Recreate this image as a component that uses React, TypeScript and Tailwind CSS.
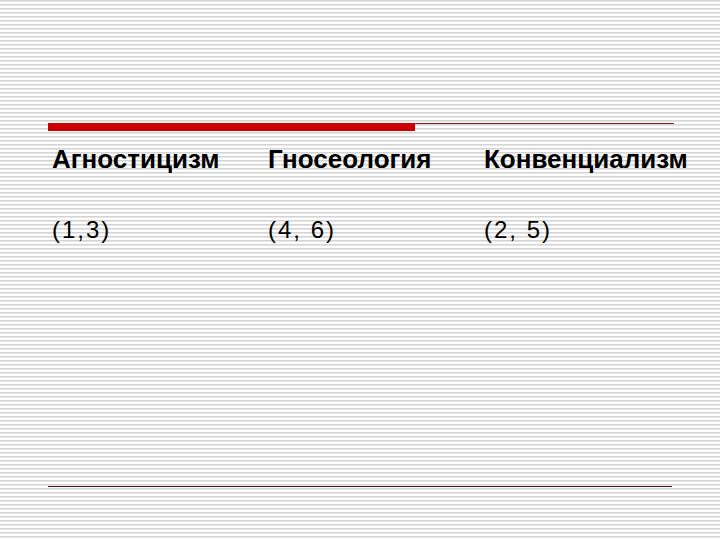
export default function App() {
  return (
    <div className="w-[720px] h-[540px] overflow-hidden bg-white bg-[repeating-linear-gradient(to_bottom,#d4d4d4_0px,#d4d4d4_1px,#e6e6e6_1px,#e6e6e6_2px,#ffffff_2px,#ffffff_4px)] pt-[123px] pl-[48px]" style={{ fontFamily: '"Liberation Sans", Arial, sans-serif' }}>
      <div className="w-[626px] flex items-start">
        <div className="w-[367px] h-[8px] bg-[#cc0000]" />
        <div className="flex-1 h-px bg-[#8b1a1a]" />
      </div>
      <div className="grid grid-cols-[216px_216px_216px] pl-[4px] mt-[13px] text-black">
        <div className="text-[26px] font-bold leading-[30px]">Агностицизм</div>
        <div className="text-[26px] font-bold leading-[30px]">Гносеология</div>
        <div className="text-[26px] font-bold leading-[30px]">Конвенциализм</div>
        <div className="text-[24px] tracking-[2px] leading-[30px] mt-[41px]">(1,3)</div>
        <div className="text-[24px] tracking-[2px] leading-[30px] mt-[41px]">(4, 6)</div>
        <div className="text-[24px] tracking-[2px] leading-[30px] mt-[41px]">(2, 5)</div>
      </div>
      <div className="w-[624px] h-px bg-[#5a1010] mt-[241px]" />
    </div>
  );
}
